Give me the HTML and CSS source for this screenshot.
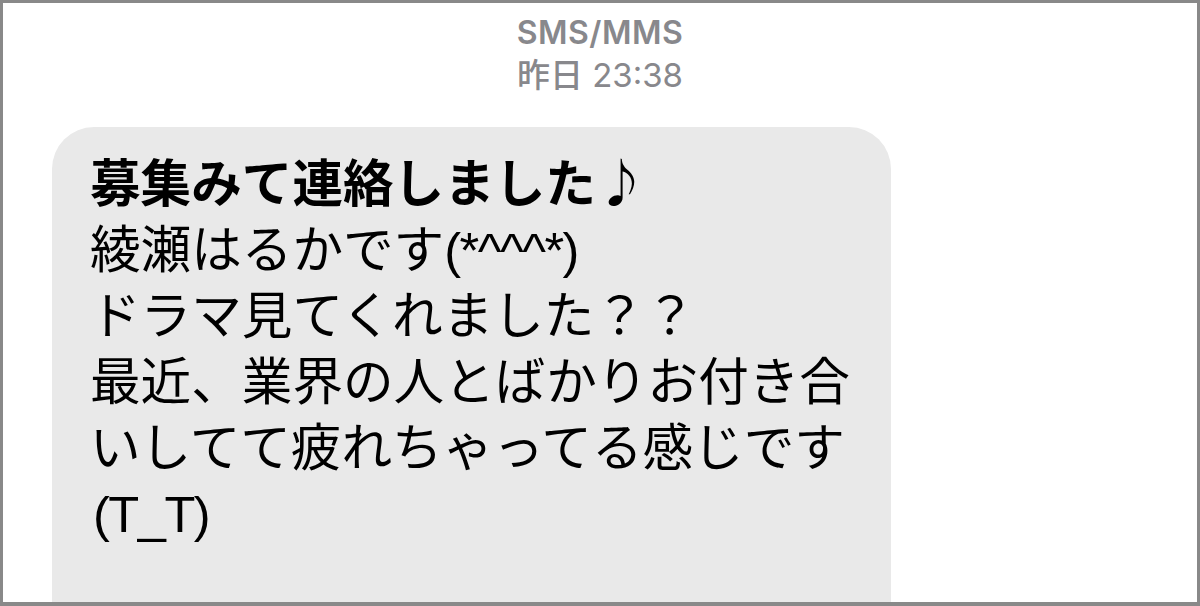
FILE: index.html
```html
<!DOCTYPE html>
<html lang="ja">
<head>
<meta charset="utf-8">
<link rel="stylesheet" href="styles.css">
</head>
<body>
<div class="frame">
  <header class="meta">
    <div class="service">SMS/MMS</div>
    <div class="time"><span class="day">昨日</span> 23:38</div>
  </header>
  <div class="bubble">
    <p class="msg"><strong class="lead">募集みて連絡しました<span class="note">♪</span></strong><br>綾瀬はるかです<span class="latin">(*^^^*)</span><br>ドラマ見てくれました？？<br>最近、業界の人とばかりお付き合<br>いしてて疲れちゃってる感じです<br><span class="latin tail">(T_T)</span></p>
  </div>
</div>
</body>
</html>
```

FILE: styles.css
```css
html, body {
  margin: 0;
  padding: 0;
  background: #ffffff;
}

.frame {
  box-sizing: border-box;
  width: 1200px;
  height: 606px;
  border: 3px solid #898989;
  border-bottom-width: 4px;
  overflow: hidden;
  background: #ffffff;
  padding-top: 9px;
}

.meta {
  display: flex;
  flex-direction: column;
  align-items: center;
  color: #88888c;
  font-family: Inter, "Liberation Sans", "Noto Sans CJK JP", sans-serif;
}

.service {
  font-size: 32px;
  font-weight: 600;
  line-height: 42px;
  letter-spacing: 0.5px;
}

.time {
  font-size: 33px;
  font-weight: 400;
  line-height: 42px;
}

.day {
  font-weight: 500;
}

.bubble {
  margin: 31px 0 0 49px;
  width: 839px;
  box-sizing: border-box;
  background: #e9e9e9;
  border-radius: 42px;
  padding: 20px 40px 200px 38px;
}

.msg {
  margin: 0;
  font-family: "Liberation Sans", "Noto Sans CJK JP", sans-serif;
  font-size: 50.6px;
  line-height: 66px;
  color: #000000;
  white-space: nowrap;
}

.lead {
  font-weight: 700;
}

.note {
  font-family: "Noto Sans CJK JP", sans-serif;
  font-weight: 400;
}

.latin {
  letter-spacing: -1.5px;
}

.tail {
  margin-left: 3px;
}
```
